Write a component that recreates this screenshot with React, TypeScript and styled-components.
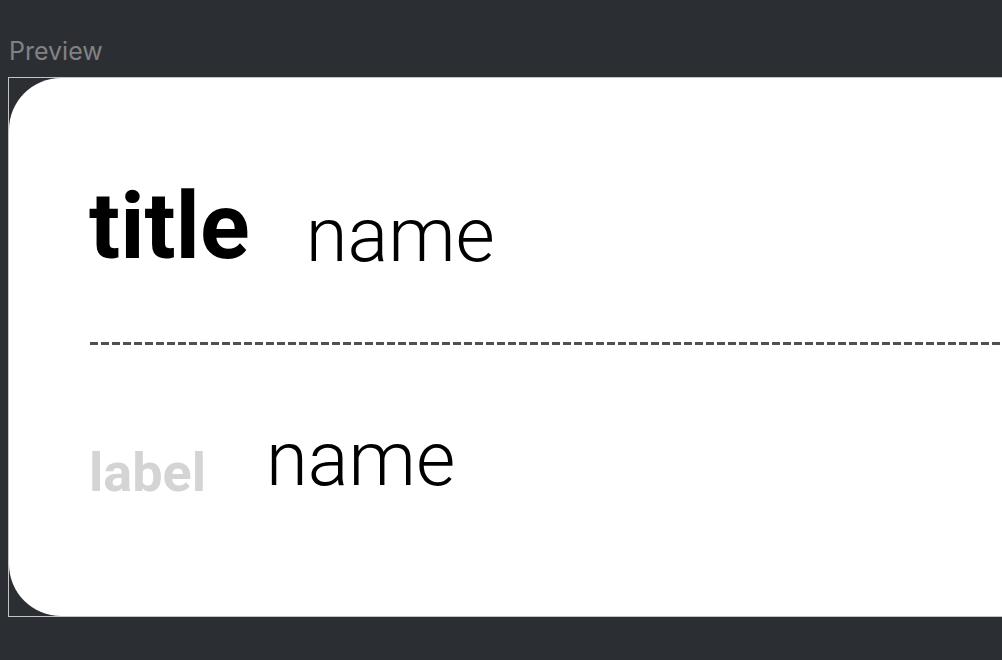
import React from "react";
import styled, { createGlobalStyle } from "styled-components";

const GlobalStyle = createGlobalStyle`
  html, body {
    margin: 0;
    padding: 0;
    background: #2b2e32;
    overflow: hidden;
  }
`;

const Page = styled.div`
  width: 1002px;
  height: 660px;
  padding: 0 0 0 8px;
  box-sizing: border-box;
  overflow: hidden;
`;

const Header = styled.div`
  height: 77px;
  padding: 36px 0 0 1px;
  box-sizing: border-box;
  font-family: Inter, "Noto Sans", sans-serif;
  font-size: 25px;
  line-height: 30px;
  color: #808285;
`;

const Frame = styled.div`
  width: 1200px;
  height: 540px;
  border: 1px solid #c4c4c4;
  box-sizing: border-box;
  background: #2b2e32;
`;

const Card = styled.div`
  height: 100%;
  background: #ffffff;
  border-radius: 52px 0 0 52px;
  padding: 95px 0 0 80px;
  box-sizing: border-box;
  font-family: Roboto, "Noto Sans", sans-serif;
  color: #000;
`;

const Row = styled.div<{ gap: number }>`
  display: flex;
  align-items: flex-end;
  gap: ${(p) => p.gap}px;
`;

const Title = styled.span`
  font-size: 92px;
  font-weight: 700;
  line-height: normal;
`;

const Label = styled.span`
  font-size: 54px;
  font-weight: 700;
  line-height: normal;
  color: #d4d4d4;
`;

const Name = styled.span`
  font-size: 76px;
  font-weight: 300;
  line-height: normal;
`;

const Divider = styled.div`
  height: 3px;
  margin: 62px 0 69px 1px;
  background: repeating-linear-gradient(
    to right,
    #505050 0 8px,
    transparent 8px 11px
  );
`;

export default function App() {
  return (
    <Page>
      <GlobalStyle />
      <Header>Preview</Header>
      <Frame>
        <Card>
          <Row gap={56}>
            <Title>title</Title>
            <Name>name</Name>
          </Row>
          <Divider />
          <Row gap={60}>
            <Label>label</Label>
            <Name>name</Name>
          </Row>
        </Card>
      </Frame>
    </Page>
  );
}
